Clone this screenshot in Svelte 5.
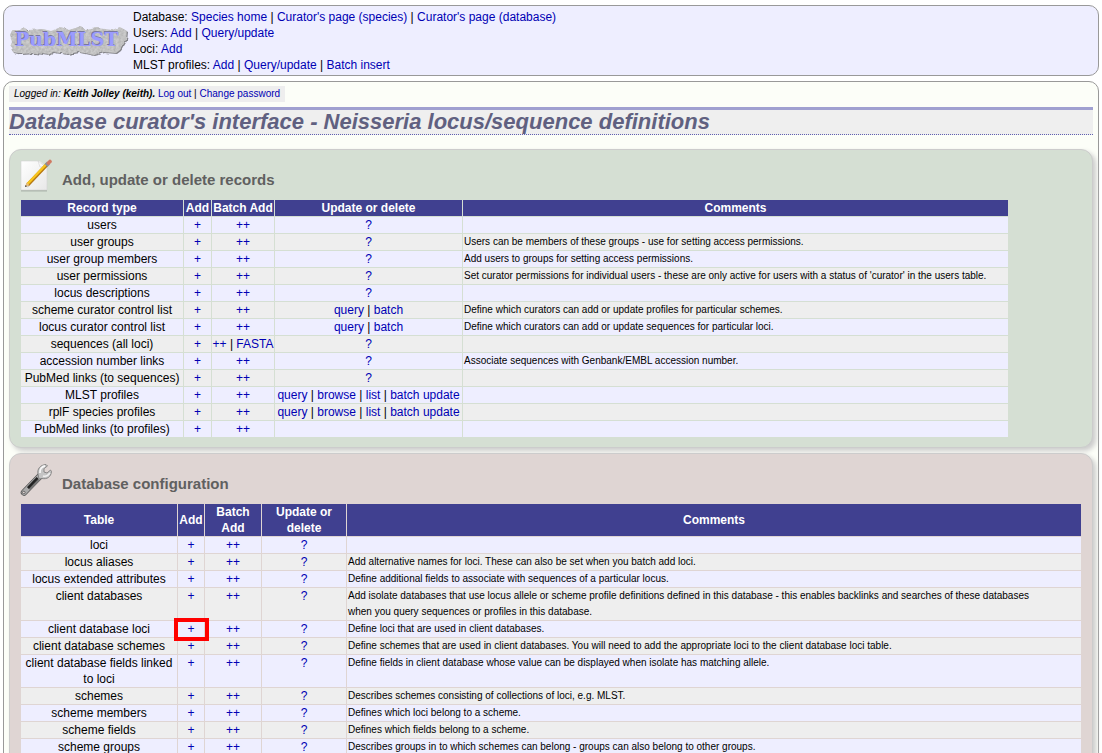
<script>
  const menu = [
    { label: 'Database', links: ['Species home', "Curator's page (species)", "Curator's page (database)"] },
    { label: 'Users', links: ['Add', 'Query/update'] },
    { label: 'Loci', links: ['Add'] },
    { label: 'MLST profiles', links: ['Add', 'Query/update', 'Batch insert'] }
  ];

  const profile = ['query', 'browse', 'list', 'batch update'];

  const records = [
    { name: 'users' },
    { name: 'user groups', note: 'Users can be members of these groups - use for setting access permissions.' },
    { name: 'user group members', note: 'Add users to groups for setting access permissions.' },
    {
      name: 'user permissions',
      note: "Set curator permissions for individual users - these are only active for users with a status of 'curator' in the users table."
    },
    { name: 'locus descriptions' },
    {
      name: 'scheme curator control list',
      update: ['query', 'batch'],
      note: 'Define which curators can add or update profiles for particular schemes.'
    },
    {
      name: 'locus curator control list',
      update: ['query', 'batch'],
      note: 'Define which curators can add or update sequences for particular loci.'
    },
    { name: 'sequences (all loci)', batch: ['++', 'FASTA'] },
    { name: 'accession number links', note: 'Associate sequences with Genbank/EMBL accession number.' },
    { name: 'PubMed links (to sequences)' },
    { name: 'MLST profiles', update: profile },
    { name: 'rplF species profiles', update: profile },
    { name: 'PubMed links (to profiles)', update: [] }
  ];

  const config = [
    { name: 'loci' },
    { name: 'locus aliases', note: 'Add alternative names for loci. These can also be set when you batch add loci.' },
    {
      name: 'locus extended attributes',
      note: 'Define additional fields to associate with sequences of a particular locus.'
    },
    {
      name: 'client databases',
      note: 'Add isolate databases that use locus allele or scheme profile definitions defined in this database - this enables backlinks and searches of these databases when you query sequences or profiles in this database.'
    },
    { name: 'client database loci', note: 'Define loci that are used in client databases.', marked: true },
    {
      name: 'client database schemes',
      note: 'Define schemes that are used in client databases. You will need to add the appropriate loci to the client database loci table.'
    },
    {
      name: 'client database fields linked to loci',
      note: 'Define fields in client database whose value can be displayed when isolate has matching allele.'
    },
    { name: 'schemes', note: 'Describes schemes consisting of collections of loci, e.g. MLST.' },
    { name: 'scheme members', note: 'Defines which loci belong to a scheme.' },
    { name: 'scheme fields', note: 'Defines which fields belong to a scheme.' },
    {
      name: 'scheme groups',
      note: 'Describes groups in to which schemes can belong - groups can also belong to other groups.'
    }
  ];
</script>

{#snippet links(items)}
  {#each items as item, i}{#if i > 0}{' | '}{/if}<a href="#top">{item}</a>{/each}
{/snippet}

{#snippet rows(items)}
  {#each items as row}
    <tr>
      <td>{row.name}</td>
      <td class="add">
        <a href="#top">+</a>
        {#if row.marked}<span class="marker"></span>{/if}
      </td>
      <td class="action">{@render links(row.batch ?? ['++'])}</td>
      <td class="action">{@render links(row.update ?? ['?'])}</td>
      <td class="note">{row.note ?? ''}</td>
    </tr>
  {/each}
{/snippet}

<header id="top">
  <svg class="logo" viewBox="0 0 120 34" role="img" aria-label="PubMLST">
    <defs>
      <filter id="stone" x="-5%" y="-10%" width="110%" height="120%" color-interpolation-filters="sRGB">
        <feTurbulence type="fractalNoise" baseFrequency="0.18" numOctaves="2" seed="4" result="wave" />
        <feDisplacementMap in="SourceGraphic" in2="wave" scale="3" xChannelSelector="R" yChannelSelector="G" result="edge" />
        <feTurbulence type="fractalNoise" baseFrequency="0.4" numOctaves="2" seed="9" />
        <feColorMatrix
          type="matrix"
          values="0.18 0 0 0 0.67  0.18 0 0 0 0.67  0.18 0 0 0 0.67  0 0 0 0 1"
          result="grain"
        />
        <feComposite in="grain" in2="edge" operator="in" result="rock" />
        <feDropShadow in="rock" dx="1" dy="1" stdDeviation="0.4" flood-color="#555" flood-opacity="0.7" />
      </filter>
    </defs>
    <path
      fill="#bbb"
      filter="url(#stone)"
      d="M3 6 11 6 14 3 19 6 34 5 42 7 52 3 60 6 72 2 76 6 88 4 103 6 111 3 118 7 117 16 111 26 107 29 95 28 84 31 70 28 58 30 44 28 39 31 26 29 12 30 4 28 1 23 3 18 1 12Z"
    />
    <g font-family="DejaVu Serif, serif" font-weight="bold" font-size="19">
      <text x="5" y="21" fill="#7878a0" aria-hidden="true">PubMLST</text>
      <text x="6" y="22" fill="#9b9bff">PubMLST</text>
    </g>
  </svg>
  <nav>
    {#each menu as group}
      <div>{group.label}: {@render links(group.links)}</div>
    {/each}
  </nav>
</header>

<main>
  <p class="login">
    <i>Logged in: <b>Keith Jolley (keith).</b></i>
    {@render links(['Log out', 'Change password'])}
  </p>
  <h1>Database curator's interface - Neisseria locus/sequence definitions</h1>

  <section class="records">
    <div class="title">
      <svg viewBox="0 0 32 34" aria-hidden="true">
        <defs>
          <linearGradient id="paper" x1="0" y1="0" x2="1" y2="1">
            <stop offset="0" stop-color="#fff" />
            <stop offset="1" stop-color="#e8e8e8" />
          </linearGradient>
        </defs>
        <path d="M1 31H27V32.500H1Z" fill="#8f9a8f" opacity="0.6" />
        <path d="M1 2H20L27 8V31H1Z" fill="url(#paper)" stroke="#d5d5d5" stroke-width="0.6" />
        <path d="M18 2 20 8 26 8Z" fill="#f8f8f8" stroke="#ccc" stroke-width="0.5" />
        <path d="M7 28 27 6" stroke="#888" stroke-width="2" opacity="0.3" />
        <path d="M7.500 26 27 5.500" stroke="#b87911" stroke-width="3.600" />
        <path d="M7 25.500 26.500 5" stroke="#f8c51e" stroke-width="2.400" />
        <path d="M5 28 6.500 23.500 9.500 26.200Z" fill="#e4bd82" />
        <path d="M5 28 5.600 26 7 27.200Z" fill="#333" />
        <path d="M26 6.500 28.500 4" stroke="#8a8f99" stroke-width="4" />
        <path d="M28.500 4 30 2.500" stroke="#d07a62" stroke-width="3.600" stroke-linecap="round" />
      </svg>
      <h2>Add, update or delete records</h2>
    </div>
    <table>
      <colgroup><col class="c1" /><col class="c2" /><col class="c3" /><col class="c4" /><col class="c5" /></colgroup>
      <thead>
        <tr><th>Record type</th><th>Add</th><th>Batch Add</th><th>Update or delete</th><th>Comments</th></tr>
      </thead>
      <tbody>{@render rows(records)}</tbody>
    </table>
  </section>

  <section class="config">
    <div class="title">
      <svg viewBox="0 0 32 34" aria-hidden="true">
        <defs>
          <linearGradient id="steel" x1="0" y1="0" x2="1" y2="1">
            <stop offset="0" stop-color="#999" />
            <stop offset="0.45" stop-color="#333" />
            <stop offset="0.6" stop-color="#777" />
            <stop offset="1" stop-color="#444" />
          </linearGradient>
        </defs>
        <path d="M4 29.500 21 12" stroke="#555" stroke-width="6.500" stroke-linecap="round" />
        <path d="M4 29.500 21 12" stroke="#aaa" stroke-width="5" stroke-linecap="round" />
        <path d="M8.500 25.500 18 15.500" stroke="url(#steel)" stroke-width="4" />
        <path d="M8 25 17.500 15" stroke="#222" stroke-width="2" />
        <circle cx="3.800" cy="29.500" r="1.300" fill="#dfd5d3" stroke="#555" stroke-width="0.800" />
        <path
          d="M18 11C17 6 20 2 26 1.500L27.500 3 24 5.500 24 9 27 10 30.500 7 31.500 8.500C31 14 27 16.500 22 15.500L19 16Z"
          fill="#c4c4c4"
          stroke="#777"
          stroke-width="0.800"
        />
        <path d="M20 10C19.500 6 22 3.500 25 3" fill="none" stroke="#f8f8f8" stroke-width="1.800" />
        <path d="M23 13C26 14 28.500 12 30 10" fill="none" stroke="#eee" stroke-width="1.500" />
      </svg>
      <h2>Database configuration</h2>
    </div>
    <table>
      <colgroup><col class="c1" /><col class="c2" /><col class="c3" /><col class="c4" /><col class="c5" /></colgroup>
      <thead>
        <tr><th>Table</th><th>Add</th><th>Batch Add</th><th>Update or delete</th><th>Comments</th></tr>
      </thead>
      <tbody>{@render rows(config)}</tbody>
    </table>
  </section>
</main>

<style>
  :global(body) {
    margin: 0;
    background: #fff;
    color: #000;
    font: 12px/16px 'Liberation Sans', Arial, sans-serif;
  }

  a {
    color: #0000b4;
    text-decoration: none;
  }

  header,
  main {
    border: 1px solid #999;
    border-radius: 10px;
  }

  header {
    display: flex;
    align-items: center;
    gap: 4px;
    margin: 5px 3px;
    padding: 2px 5px;
    background: #eef;
  }

  .logo {
    flex: none;
    width: 120px;
    height: 34px;
  }

  nav {
    padding-top: 1px;
  }

  main {
    margin: 5px 3px;
    padding: 4px 5px 5px;
    background: #fcfef8;
  }

  .login {
    width: fit-content;
    margin: 0;
    padding: 0 5px;
    background: #eee;
    font-size: 10px;
  }

  h1 {
    margin: 5px 0 14px;
    border-top: 3px solid #a0a0d0;
    border-bottom: 1px dotted #6060b0;
    background: #efefef;
    color: #606080;
    font: italic bold 22px/24px 'Liberation Sans', Arial, sans-serif;
  }

  section {
    margin-bottom: 5px;
    padding: 9px 10px;
    border: 1px solid #ccc;
    border-radius: 12px;
    box-shadow: 3px 3px 5px #ccc;
  }

  .records {
    --panel: #d5dfd3;
    background: var(--panel);
  }

  .config {
    --panel: #dfd5d3;
    background: var(--panel);
  }

  .title {
    display: flex;
    align-items: center;
    gap: 10px;
    padding-bottom: 6px;
  }

  .title svg {
    width: 32px;
    height: 34px;
  }

  h2 {
    margin: 0;
    padding-top: 7px;
    color: #606060;
    font-size: 15px;
    line-height: 18px;
  }

  table {
    border-collapse: collapse;
    text-align: center;
  }

  .config table {
    width: 100%;
  }

  .records .c1 { width: 163px; }
  .records .c2 { width: 28px; }
  .records .c3 { width: 63px; }
  .records .c4 { width: 188px; }
  .records .c5 { width: 546px; }
  .config .c1 { width: 157px; }
  .config .c2 { width: 27px; }
  .config .c3 { width: 57px; }
  .config .c4 { width: 85px; }

  th,
  td {
    padding: 0 1px;
    border: 1px solid var(--panel);
  }

  th {
    background: #404090;
    color: #fff;
  }

  td {
    vertical-align: top;
  }

  tbody tr {
    background: #eef;
  }

  tbody tr:nth-child(even) {
    background: #eee;
  }

  .action {
    padding: 0;
    white-space: nowrap;
  }

  .note {
    font-size: 10px;
    text-align: left;
  }

  .config .note {
    padding-right: 40px;
  }

  .add {
    position: relative;
  }

  .marker {
    position: absolute;
    inset: -3px -5px -4px -4px;
    border: 4px solid #f00;
  }
</style>
